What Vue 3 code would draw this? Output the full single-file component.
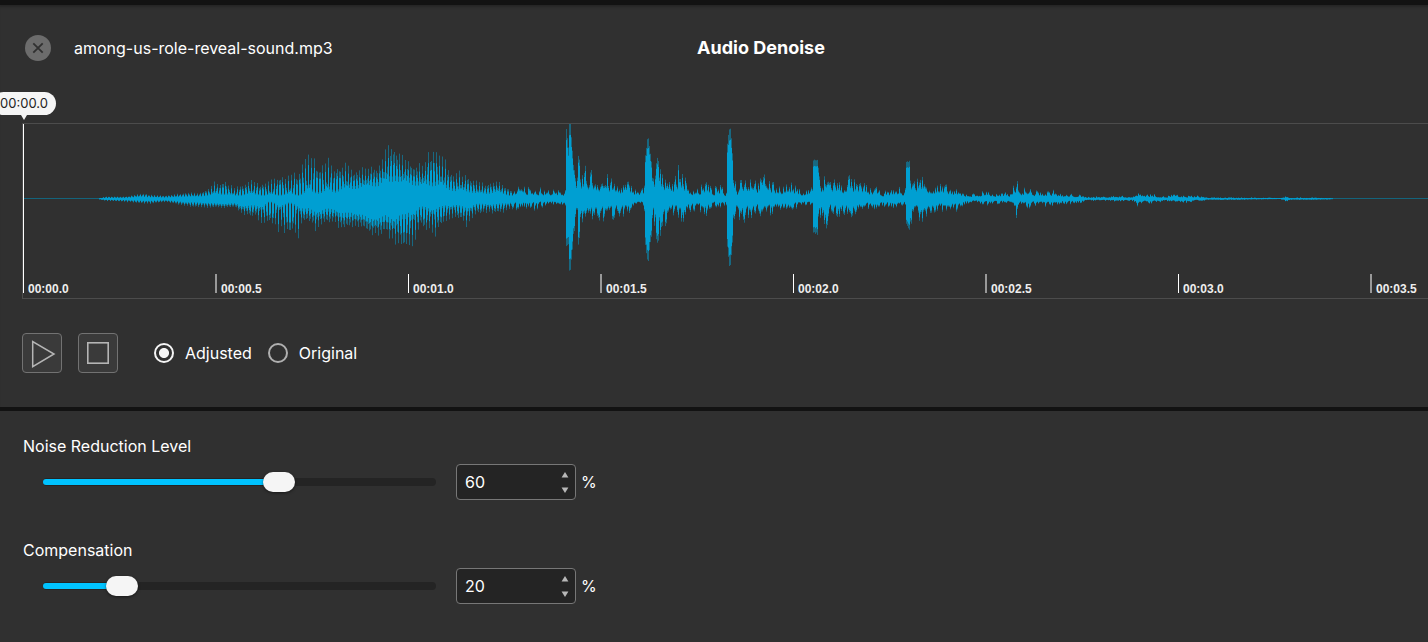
<script setup>
import { ref, reactive } from 'vue'

const source = ref('adjusted')
const marks = ['00:00.0', '00:00.5', '00:01.0', '00:01.5', '00:02.0', '00:02.5', '00:03.0', '00:03.5']

const settings = reactive([
  { id: 'noise', label: 'Noise Reduction Level', value: 60 },
  { id: 'comp', label: 'Compensation', value: 20 },
])

function step(item, by) {
  item.value = Math.min(100, Math.max(0, Number(item.value) + by))
}

// Envelope of the clip: position, peak above the axis, peak below the axis
const envelope = [
  0, 0, 0, 74, 0, 0, 82, 2, 2, 102, 2, 3, 119, 6, 5, 127, 4, 5, 142, 3, 3, 162, 6, 8, 177, 6, 9, 187, 11, 9, 192, 18, 9,
  202, 19, 9, 212, 12, 9, 217, 14, 15, 225, 20, 18, 232, 17, 19, 240, 17, 26, 249, 21, 31, 254, 25, 36, 257, 28, 35,
  263, 26, 44, 274, 28, 42, 279, 38, 26, 285, 46, 24, 292, 42, 32, 299, 38, 28, 303, 41, 25, 312, 38, 26, 318, 39, 33,
  329, 31, 28, 339, 31, 30, 347, 33, 36, 355, 37, 38, 363, 55, 34, 367, 58, 42, 373, 56, 49, 377, 42, 48, 382, 45, 57,
  389, 38, 50, 397, 37, 32, 407, 52, 36, 412, 52, 38, 417, 47, 32, 423, 38, 23, 432, 26, 20, 437, 28, 26, 443, 25, 29,
  452, 18, 17, 464, 15, 15, 474, 20, 17, 487, 10, 12, 497, 13, 11, 512, 13, 11, 522, 9, 7, 527, 9, 6, 541, 8, 6,
  542, 10, 8, 543, 70, 48, 545, 52, 46, 546, 76, 72, 547, 76, 72, 550, 35, 40, 553, 15, 15, 554, 20, 20, 555, 43, 48, 558, 31, 26,
  567, 32, 26, 573, 26, 22, 582, 26, 24, 589, 18, 22, 597, 15, 16, 605, 18, 18, 612, 10, 8, 620, 11, 7, 621, 20, 14,
  622, 46, 46, 624, 62, 64, 625, 62, 64, 627, 45, 45, 630, 22, 25, 634, 42, 46, 639, 24, 30, 645, 30, 26, 650, 18, 16, 656, 34, 18,
  660, 31, 37, 664, 12, 14, 677, 12, 13, 683, 20, 17, 689, 9, 8, 695, 15, 9, 702, 8, 6, 703, 18, 14, 704, 56, 50,
  706, 74, 68, 707, 74, 70, 710, 35, 35, 714, 12, 12, 716, 32, 36, 722, 24, 22, 729, 28, 22, 735, 16, 15, 743, 31, 23, 749, 16, 16,
  759, 14, 13, 767, 16, 11, 777, 9, 8, 785, 10, 7, 789, 15, 12, 790, 40, 34, 794, 40, 36, 797, 20, 22, 799, 15, 16,
  802, 27, 38, 807, 25, 18, 813, 23, 19, 819, 14, 17, 824, 28, 19, 828, 22, 19, 833, 16, 14, 840, 17, 15, 845, 11, 11,
  851, 13, 16, 857, 7, 7, 867, 8, 9, 875, 12, 11, 881, 8, 8, 883, 38, 25, 886, 38, 32, 890, 18, 18, 895, 25, 22,
  902, 23, 23, 909, 15, 16, 917, 15, 14, 925, 13, 12, 932, 9, 14, 942, 6, 5, 952, 5, 4, 964, 9, 7, 972, 5, 5, 982, 6, 5,
  987, 5, 6, 990, 17, 13, 993, 19, 23, 997, 10, 8, 1004, 12, 10, 1012, 8, 7, 1019, 7, 9, 1029, 9, 8, 1039, 4, 5,
  1052, 5, 6, 1062, 2, 2, 1077, 2, 2, 1095, 3, 3, 1110, 2, 2, 1114, 7, 7, 1117, 9, 8, 1120, 4, 4, 1125, 5, 6,
  1132, 4, 4, 1142, 2, 2, 1149, 5, 4, 1157, 3, 3, 1163, 3, 4, 1175, 3, 2, 1187, 1, 1, 1212, 1, 1, 1257, 1, 0,
  1263, 3, 3, 1267, 1, 1, 1292, 1, 1, 1317, 0, 0, 1540, 0, 0,
]
// How much of each half the solid body always fills: position, percent above, percent below
const body = [
  0, 30, 30, 180, 40, 50, 200, 25, 70, 235, 25, 40, 245, 15, 12, 275, 12, 10, 280, 12, 50, 312, 20, 50, 325, 35, 60,
  345, 50, 72, 365, 35, 60, 385, 50, 30, 410, 30, 30, 440, 35, 35, 470, 40, 40, 500, 25, 25, 540, 35, 35, 542, 80, 80,
  550, 80, 80, 556, 30, 32, 1540, 30, 32,
]

function sample(table, x) {
  let i = 0
  while (i < table.length - 6 && table[i + 3] <= x) i += 3
  const t = Math.min(1, Math.max(0, (x - table[i]) / (table[i + 3] - table[i])))
  return [1, 2].map(k => table[i + k] + (table[i + 3 + k] - table[i + k]) * t)
}

let seed = 7
function noise() {
  seed = (seed * 16807) % 2147483647
  return seed / 2147483647
}

function buildWave() {
  let soft = ''
  let solid = ''
  let a = 0
  let b = 0
  for (let x = 0; x < 1440; x++) {
    const [up, down] = sample(envelope, x)
    const [bu, bd] = sample(body, x).map(v => v / 100)
    if (x < 490) {
      const swing = (Math.cos((x * 2 * Math.PI) / 2.85) + 1) / 2
      a = swing * (0.7 + noise() * 0.35)
      b = (1 - swing) * (0.7 + noise() * 0.35)
    } else if (up > 36) {
      a = 0.9 + noise() * 0.1
      b = 0.9 + noise() * 0.1
    } else {
      // Short decays keep single peaks two or three columns wide
      a = Math.max(a * 0.35, Math.pow(noise(), 1.8) * 1.1)
      b = Math.max(b * 0.35, Math.pow(noise(), 1.8) * 1.1)
    }
    const top = up * (bu + (1 - bu) * a)
    const bottom = down * (bd + (1 - bd) * b)
    if (up + down > 0.6) {
      const core = x < 490 ? 0.76 : 0.84
      soft += `M${x}.5 ${(74.5 - top).toFixed(1)}V${(75 + bottom).toFixed(1)}`
      solid += `M${x}.5 ${(74.5 - top * core).toFixed(1)}V${(75 + bottom * core).toFixed(1)}`
    }
  }
  return { soft, solid }
}
const wave = buildWave()
</script>

<template>
  <main class="page">
    <section class="player">
      <header class="head">
        <div class="file">
          <button class="close" type="button" aria-label="Close file">
            <svg width="26" height="26" viewBox="0 0 26 26" aria-hidden="true">
              <path d="M8.3 8.3l9.4 9.4M17.7 8.3l-9.4 9.4" fill="none" stroke="#303030" stroke-width="1.8" />
            </svg>
          </button>
          <span class="name">among-us-role-reveal-sound.mp3</span>
        </div>
        <h1>Audio Denoise</h1>
      </header>

      <div class="timeline">
        <div class="frame">
          <svg class="wave" width="1440" height="150" viewBox="0 0 1440 150" aria-hidden="true">
            <path d="M0 74.5H1440" stroke="#14647c" />
            <path :d="wave.soft" stroke="#009fd2" stroke-opacity=".5" />
            <path :d="wave.solid" stroke="#009fd2" />
          </svg>
          <div class="ruler">
            <div v-for="(mark, i) in marks" :key="mark" class="mark" :class="{ half: i % 2 }">{{ mark }}</div>
          </div>
        </div>
        <div class="playhead"><span class="bubble">00:00.0</span></div>
      </div>

      <div class="controls">
        <button class="square" type="button" aria-label="Play">
          <svg width="38" height="38" viewBox="0 0 38 38" aria-hidden="true">
            <path d="M9.7 7.6v25L31 20z" fill="none" stroke="#b5b5b5" stroke-width="1.5" />
          </svg>
        </button>
        <button class="square" type="button" aria-label="Stop">
          <svg width="38" height="38" viewBox="0 0 38 38" aria-hidden="true">
            <rect x="8.8" y="8.8" width="20.4" height="20.4" fill="none" stroke="#b5b5b5" stroke-width="1.6" />
          </svg>
        </button>
        <div class="choices">
          <label><input v-model="source" type="radio" name="source" value="adjusted" />Adjusted</label>
          <label><input v-model="source" type="radio" name="source" value="original" />Original</label>
        </div>
      </div>
    </section>

    <section class="settings">
      <div v-for="item in settings" :key="item.id" class="setting">
        <label :for="item.id">{{ item.label }}</label>
        <div class="row">
          <div class="slider">
            <div class="fill" :style="{ width: item.value + '%' }"></div>
            <input v-model.number="item.value" type="range" min="0" max="100" :aria-label="item.label" />
          </div>
          <div class="number">
            <input :id="item.id" v-model.number="item.value" type="number" min="0" max="100" />
            <div class="spin">
              <button type="button" :aria-label="'Increase ' + item.label" @click="step(item, 1)">
                <svg width="8" height="6" viewBox="0 0 8 6" aria-hidden="true"><path d="M4 0l3.4 5.6H.6z" fill="#b8b8b8" /></svg>
              </button>
              <button type="button" :aria-label="'Decrease ' + item.label" @click="step(item, -1)">
                <svg width="8" height="6" viewBox="0 0 8 6" aria-hidden="true"><path d="M4 6L.6.4h6.8z" fill="#b8b8b8" /></svg>
              </button>
            </div>
          </div>
          <span class="unit">%</span>
        </div>
      </div>
    </section>
  </main>
</template>

<style>
body {
  background: #303030;
}
</style>

<style scoped>
* {
  box-sizing: border-box;
}
.page {
  min-height: 100vh;
  overflow: hidden;
  background: #303030;
  border-top: 5px solid #121212;
  color: #fff;
  font: 16px/20px Inter, "Open Sans", sans-serif;
}
button {
  padding: 0;
  border: 0;
  background: none;
  cursor: pointer;
}
svg {
  display: block;
}
.player {
  border-bottom: 4px solid #121212;
  box-shadow: inset 0 4px 3px -2px #252525;
  padding-bottom: 34px;
}
.head {
  display: grid;
  grid-template-columns: 94px 1fr auto 1fr;
  align-items: center;
  padding: 30px 24px 0;
}
.file {
  grid-column: 1 / 3;
  display: flex;
  align-items: center;
  gap: 23px;
}
.close {
  width: 26px;
  height: 26px;
  border-radius: 50%;
  background: #6c6c6c;
  margin-left: 1px;
}
h1 {
  margin: 0;
  font-size: 18px;
  line-height: 24px;
  font-weight: 700;
}
.timeline {
  position: relative;
  margin: 62px 0 0 22px;
}
.frame {
  overflow: hidden;
  border: 1px solid #4c4c4c;
  border-right: 0;
  padding-bottom: 5px;
}
.ruler {
  display: grid;
  grid-template-columns: repeat(4, 192px 193px);
  grid-template-rows: 19px;
}
.mark {
  border-left: 1px solid #fff;
  padding: 7px 0 0 4px;
  height: 19px;
  font: bold 12px/16px "Liberation Sans", Arial, sans-serif;
  color: #eee;
}
.mark.half {
  border-left: 2px solid #999;
}
.playhead {
  position: absolute;
  left: 1px;
  top: 1px;
  width: 1px;
  height: 169px;
  background: #fff;
}
.bubble {
  position: absolute;
  left: 1px;
  bottom: 178px;
  transform: translateX(-50%);
  width: 64px;
  height: 23px;
  border-radius: 12px;
  background: #f5f5f5;
  color: #222;
  font-size: 13px;
  line-height: 23px;
  text-align: center;
}
.bubble::after {
  content: "";
  position: absolute;
  left: 29px;
  top: 23px;
  border: 3px solid transparent;
  border-top: 5px solid #f5f5f5;
  border-bottom: 0;
}
.controls {
  display: flex;
  align-items: center;
  gap: 16px;
  padding: 34px 22px 0;
}
.square {
  width: 40px;
  height: 40px;
  border: 1px solid #727272;
  border-radius: 4px;
  background: #3a3a3a;
}
.choices {
  display: flex;
  gap: 16px;
  margin-left: 20px;
}
.choices label {
  display: flex;
  align-items: center;
  gap: 11px;
}
.choices input {
  appearance: none;
  width: 20px;
  height: 20px;
  margin: 0;
  border: 2px solid #b0b0b0;
  border-radius: 50%;
}
.choices input:checked {
  border-color: #f5f5f5;
  background: radial-gradient(circle, #f5f5f5 4.6px, transparent 5.4px);
}
.settings {
  display: grid;
  gap: 40px;
  padding: 25px 23px;
}
.setting > label {
  display: block;
}
.row {
  display: flex;
  align-items: center;
  margin-top: 8px;
  padding-left: 20px;
}
.slider {
  position: relative;
  width: 393px;
  height: 8px;
  padding: 1px 0;
  border-radius: 4px;
  background: #242424;
}
.fill {
  height: 6px;
  border-radius: 3px;
  background: #00c3ff;
}
.slider input {
  appearance: none;
  position: absolute;
  left: -16px;
  top: -6px;
  width: calc(100% + 32px);
  height: 20px;
  margin: 0;
  background: none;
}
.slider input::-webkit-slider-thumb {
  appearance: none;
  width: 32px;
  height: 20px;
  border-radius: 10px;
  background: #f5f5f5;
  box-shadow: 0 1px 3px rgba(0, 0, 0, 0.5);
}
.number {
  display: flex;
  width: 120px;
  height: 36px;
  margin-left: 20px;
  border: 1px solid #777;
  border-radius: 4px;
  background: #242424;
}
.number input {
  appearance: textfield;
  flex: 1;
  min-width: 0;
  padding: 0 0 0 8px;
  border: 0;
  background: none;
  color: #fff;
  font: inherit;
}
.number input::-webkit-inner-spin-button {
  appearance: none;
  margin: 0;
}
.spin {
  display: flex;
  flex-direction: column;
  justify-content: center;
  gap: 9px;
  padding-right: 6px;
}
.unit {
  margin-left: 5px;
}
</style>
